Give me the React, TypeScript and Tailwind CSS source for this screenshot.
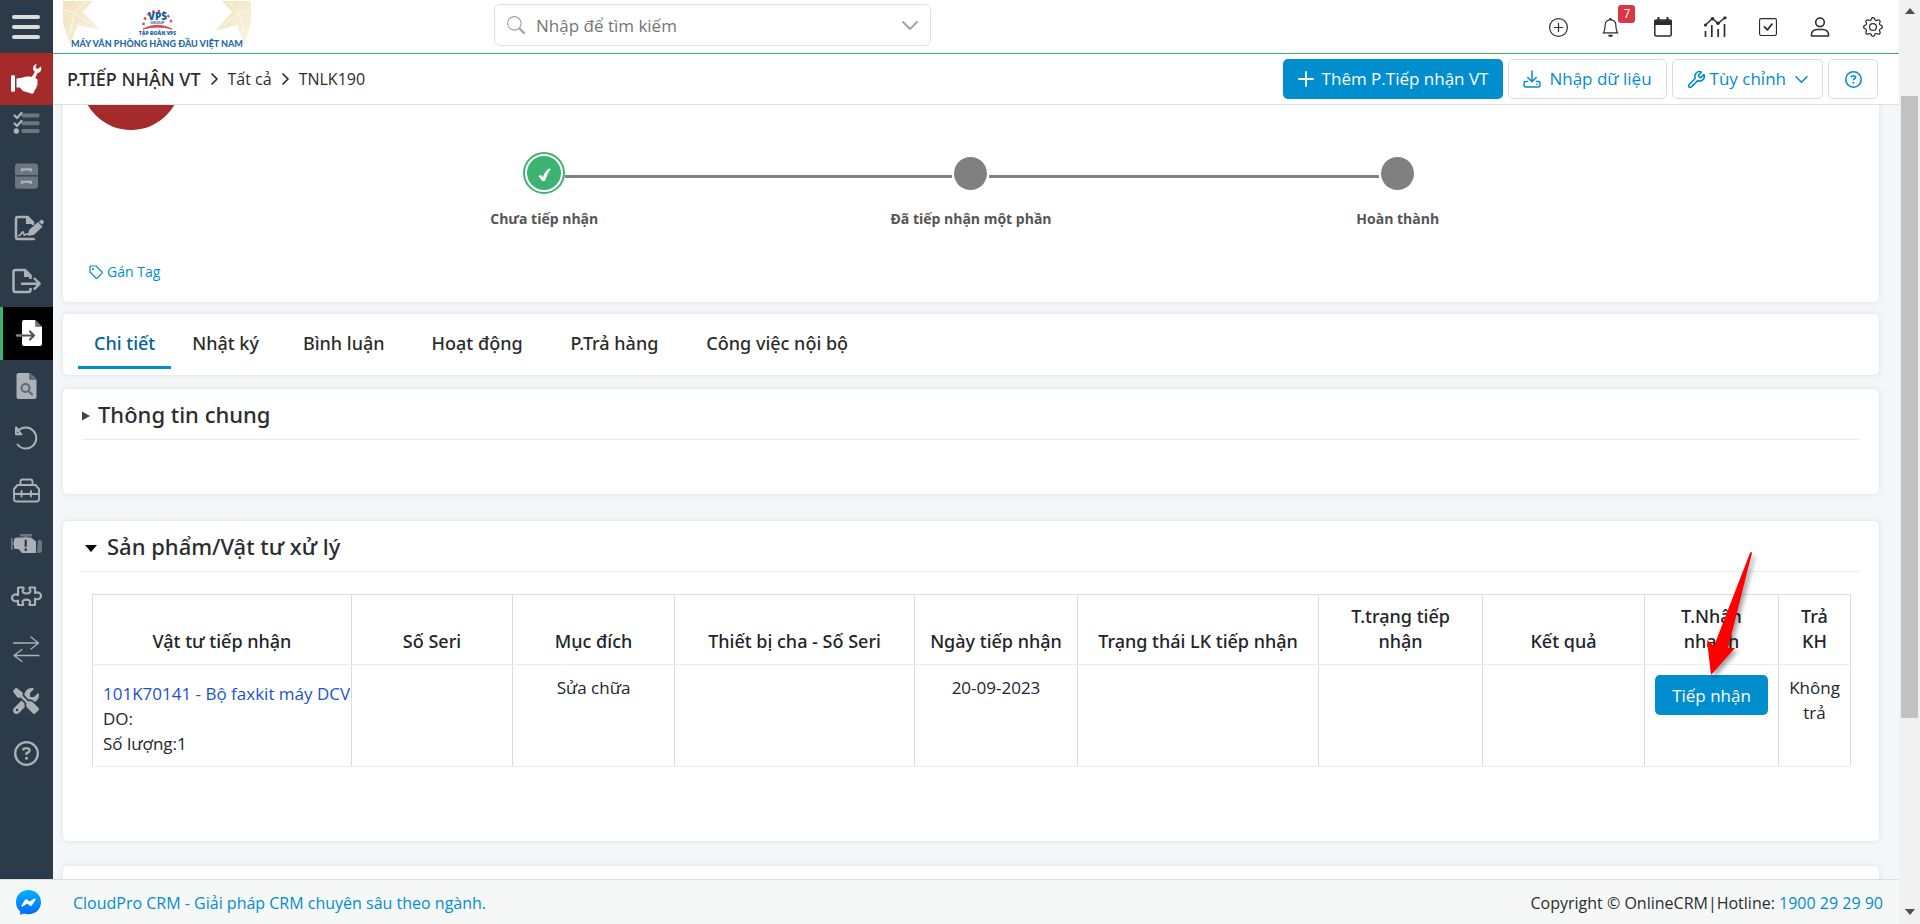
import type { ReactNode } from "react";
import { BsBell, BsCheckSquare, BsGear, BsPlusCircle, BsSearch } from "react-icons/bs";
import { FaRegCircleQuestion, FaScrewdriverWrench } from "react-icons/fa6";
import { Wrench } from "lucide-react";

function Icon({ children }: { children: ReactNode }) {
    return (
        <svg viewBox="0 0 32 32" className="size-8 overflow-visible" fill="none" stroke="none" aria-hidden="true">
            {children}
        </svg>
    );
}

function ChevronDown({ className }: { className: string }) {
    return (
        <svg viewBox="0 0 16 9" className={className} fill="none" stroke="currentColor" strokeWidth="2" strokeLinecap="round" strokeLinejoin="round" aria-hidden="true">
            <path d="m1 1 7 7 7-7" />
        </svg>
    );
}

function ChevronRight() {
    return (
        <svg viewBox="0 0 7 12" className="mx-[10px] h-3 w-[7px]" fill="none" stroke="currentColor" strokeWidth="1.700" strokeLinecap="round" strokeLinejoin="round" aria-hidden="true">
            <path d="m1 1 5 5-5 5" />
        </svg>
    );
}

const menu = [
    {
        label: "Danh sách",
        icon: (
            <Icon>
                <g fill="currentColor" opacity="0.5">
                    <rect x="11.500" y="6.500" width="18" height="4" rx="1.500" />
                    <rect x="11.500" y="14.200" width="18" height="4" rx="1.500" />
                    <rect x="11.500" y="22" width="18" height="4" rx="1.500" />
                </g>
                <path d="M4.500 8.500 7 11l4.500-5M4.500 16.500 7 19l4.500-5" stroke="currentColor" strokeWidth="2.400" strokeLinecap="round" strokeLinejoin="round" />
                <circle cx="6.300" cy="24" r="2.700" fill="currentColor" />
            </Icon>
        ),
    },
    {
        label: "Kho",
        icon: (
            <Icon>
                <g fill="currentColor" opacity="0.5">
                    <path d="M5 6.500a3 3 0 0 1 3-3h17a3 3 0 0 1 3 3v8.700H5zM5 16.500h23v9.200a3 3 0 0 1-3 3H8a3 3 0 0 1-3-3z" />
                </g>
                <path d="M12 11.500V9.300h9v2.200M12 24v-2.200h9V24" stroke="currentColor" strokeWidth="2.200" />
            </Icon>
        ),
    },
    {
        label: "Ký nhận",
        icon: (
            <Icon>
                <path d="M24 26.500v.5H8a2 2 0 0 1-2-2V7a2 2 0 0 1 2-2h9.500l5.500 5.500v2.500" stroke="currentColor" strokeWidth="2.500" strokeLinejoin="round" />
                <path d="M16 4.500 24 12h-8z" fill="currentColor" />
                <path d="m19 18 9-8 4.500 4.800-8.500 8L18 24z" fill="currentColor" />
                <path d="m28.800 9.800 1.400-1.300a2 2 0 0 1 3 3l-1.200 1.300z" fill="currentColor" />
                <path d="M9 23.500c2 0 2.500-3.500 4-3.500.8 0 .3 3 1.500 3s1.500-1.500 4.500-1" stroke="currentColor" strokeWidth="1.800" strokeLinecap="round" />
            </Icon>
        ),
    },
    {
        label: "Xuất",
        icon: (
            <Icon>
                <path d="M20.500 14V10.500L15 5H5.500a2 2 0 0 0-2 2v18a2 2 0 0 0 2 2h13a2 2 0 0 0 2-2v-2" stroke="currentColor" strokeWidth="2.500" />
                <path d="M14 4.500 21.500 12H14z" fill="currentColor" />
                <path d="M12 18.700h17M24.500 13.500l5.200 5.200-5.200 5.200" stroke="currentColor" strokeWidth="2.400" strokeLinecap="round" strokeLinejoin="round" />
            </Icon>
        ),
    },
    {
        label: "P.Tiếp nhận VT",
        active: true,
        icon: (
            <Icon>
                <path d="M11 5a2 2 0 0 1 2-2h11.500v6.500H31V27a2 2 0 0 1-2 2H13a2 2 0 0 1-2-2z" fill="#fff" />
                <path d="m25 3.500 5.500 5.500H25z" fill="#777" />
                <path d="M6 18.500h5" stroke="#888" strokeWidth="2.400" strokeLinecap="round" />
                <path d="M11 18.500h12M19 14.500l4 4-4 4" stroke="#555" strokeWidth="2.200" strokeLinecap="round" strokeLinejoin="round" />
            </Icon>
        ),
    },
    {
        label: "Tra cứu",
        icon: (
            <Icon>
                <path d="M6.500 5a2 2 0 0 1 2-2h11v6.500h7V27a2 2 0 0 1-2 2h-16a2 2 0 0 1-2-2z" fill="currentColor" />
                <path d="m20.500 3 6 5.800h-6z" fill="currentColor" opacity="0.5" />
                <circle cx="15.500" cy="18" r="4" stroke="#5f6a75" strokeWidth="2" />
                <path d="m18.500 21 3.500 3.500" stroke="#5f6a75" strokeWidth="2" strokeLinecap="round" />
            </Icon>
        ),
    },
    {
        label: "Hoàn trả",
        icon: (
            <Icon>
                <path d="M7.500 22.500A10.500 10.500 0 1 0 8 9l3.500 3.200H6V5.500l3 3" stroke="currentColor" strokeWidth="2" strokeLinecap="round" strokeLinejoin="round" />
            </Icon>
        ),
    },
    {
        label: "Bộ dụng cụ",
        icon: (
            <Icon>
                <path d="M7.500 10h18l3.500 4V24a2.500 2.500 0 0 1-2.500 2.500h-20A2.500 2.500 0 0 1 4 24V14zM10.500 10V6.500a2 2 0 0 1 2-2h8a2 2 0 0 1 2 2V10M4 19h25M11.500 16v5.500M21 16v5.500" stroke="currentColor" strokeWidth="1.900" strokeLinejoin="round" strokeLinecap="round" />
            </Icon>
        ),
    },
    {
        label: "Động cơ",
        icon: (
            <Icon>
                <g fill="currentColor" opacity="0.5">
                    <path d="M10 6h12v2.500h-4.500v3h-3v-3H10zM1 10h1.800v4H5v3H2.800v5H1zM28 12h2.500l1.500 1.500v9.500L30.500 25H27z" />
                </g>
                <path d="M8 9.500h13l5 4V25H12l-3.500-4H5.500A1.500 1.500 0 0 1 4 19.500v-7A3 3 0 0 1 7 9.500z" fill="currentColor" />
                <path d="M15.700 12.500v5.500M15.700 21v1.200" stroke="#2c3b49" strokeWidth="2.200" strokeLinecap="round" />
            </Icon>
        ),
    },
    {
        label: "Linh kiện",
        icon: (
            <Icon>
                <path d="M8.500 7.500h5v2c-1 .8-1.200 2-.2 3 1.500 1.400 5 1.400 6.500 0 1-1 .8-2.200-.2-3v-2H25v5.500c2-1.300 6-.5 6 2.800s-4 4.100-6 2.800V25h-5.500v-1.600c1-1 .8-2.100-.2-2.900-1.500-1.200-4.600-1.200-6 0-1 .8-1.200 1.900-.2 2.900V25H8v-4.400c-2 1.300-6 .5-6-2.800s4-4.100 6-2.800V8z" stroke="currentColor" strokeWidth="2.100" strokeLinejoin="round" />
            </Icon>
        ),
    },
    {
        label: "Chuyển đổi",
        icon: (
            <Icon>
                <path d="M3.500 10H28M21 4l7.500 6-7.500 6M29 22.500H4.500M12 16.500l-8 6 8 6" stroke="currentColor" strokeWidth="1.300" strokeLinecap="round" strokeLinejoin="round" />
            </Icon>
        ),
    },
    { label: "Công cụ", icon: <FaScrewdriverWrench className="size-[26px]" /> },
    { label: "Trợ giúp", icon: <FaRegCircleQuestion className="size-[25px]" /> },
];

const tabs = [
    { label: "Chi tiết", className: "px-4 border-[#008ecf] text-[#00649a]" },
    { label: "Nhật ký", className: "px-[21px] border-transparent" },
    { label: "Bình luận", className: "px-[23px] border-transparent" },
    { label: "Hoạt động", className: "px-6 border-transparent" },
    { label: "P.Trả hàng", className: "px-6 border-transparent" },
    { label: "Công việc nội bộ", className: "px-6 border-transparent" },
];

const columns = [
    { label: "Vật tư tiếp nhận", width: "w-[259px]" },
    { label: "Số Seri", width: "w-[161px]" },
    { label: "Mục đích", width: "w-[162px]" },
    { label: "Thiết bị cha - Số Seri", width: "w-[240px]" },
    { label: "Ngày tiếp nhận", width: "w-[163px]" },
    { label: "Trạng thái LK tiếp nhận", width: "w-[241px]" },
    { label: "T.trạng tiếp nhận", width: "w-[164px]" },
    { label: "Kết quả", width: "w-[162px]" },
    { label: "T.Nhận nhanh", width: "w-[134px]" },
    { label: "Trả KH", width: "w-[72px]" },
];

function Logo() {
    return (
        <svg viewBox="0 0 188 48" className="h-12 w-[188px]" role="img" aria-label="VPS">
            <defs>
                <linearGradient id="petal" x1="0" y1="0" x2="1" y2="1">
                    <stop offset="0" stopColor="#f0e2bd" />
                    <stop offset="1" stopColor="#fbf5e3" />
                </linearGradient>
            </defs>
            <g fill="url(#petal)">
                <path d="M0 0h30L20 11l17 18-22-5-8 20L0 22z" />
                <path d="M188 0h-29l10 11-17 19 22-6 7 20 7-22z" />
            </g>
            <path d="M11 12 22 1M11 12 1 9M11 12l16 11M11 12 7 32M176 12 166 1M176 12l11-3M176 12l-15 12M176 12l5 20" stroke="#fff" strokeWidth="0.700" fill="none" />
            <path d="M80.500 24A14 14 0 1 1 108.500 24" fill="none" stroke="#e0474c" strokeWidth="2.400" strokeDasharray="2.400 3.100" />
            <path d="M80 28q14.500-7.500 29 0-14.500-4-29 0z" fill="#e0474c" stroke="#e0474c" />
            <text x="94.500" y="18.500" textAnchor="middle" fontFamily="Open Sans, sans-serif" fontSize="10" fontWeight="800" fill="#1762a7">VPS</text>
            <text x="94.500" y="23" textAnchor="middle" fontFamily="Open Sans, sans-serif" fontSize="4" fontWeight="700" fill="#1762a7">GROUP</text>
            <text x="94.500" y="34" textAnchor="middle" fontFamily="Open Sans, sans-serif" fontSize="5" fontWeight="800" fill="#1762a7">TẬP ĐOÀN VPS</text>
            <text x="94" y="45.500" textAnchor="middle" fontFamily="Lato, sans-serif" fontSize="9" fontWeight="900" fill="#1f6aa8">MÁY VĂN PHÒNG HÀNG ĐẦU VIỆT NAM</text>
        </svg>
    );
}

function HeaderIcon({ label, children }: { label: string; children: ReactNode }) {
    return (
        <button type="button" aria-label={label} className="relative flex justify-center">
            {children}
        </button>
    );
}

function Sidebar() {
    return (
        <aside className="flex w-[53px] shrink-0 flex-col overflow-hidden bg-[#2c3b49]">
            <button type="button" aria-label="Menu" className="flex h-[53px] w-full shrink-0 flex-col items-center justify-center gap-[6px] pr-px">
                <span className="h-1 w-7 rounded-sm bg-[#dcdcdc]" />
                <span className="h-1 w-7 rounded-sm bg-[#dcdcdc]" />
                <span className="h-1 w-7 rounded-sm bg-[#dcdcdc]" />
            </button>
            <a href="#service" aria-label="Dịch vụ" className="z-10 flex h-[52px] shrink-0 items-center justify-center bg-[#a52a2a] pr-px">
                <svg viewBox="0 0 32 32" className="size-8" fill="#fff" aria-hidden="true">
                    <path d="M1 13.500q0-1.200 1.200-1.200h1.600Q5 12.300 5 13.500v14q0 1.200-1.200 1.200H2.200Q1 28.700 1 27.500z" />
                    <path d="M6.500 15.500 12 14.700q4-1.700 8-1.200l5 1.200 2.200 1.600q.9 1 .2 2.400l.2 2.500-.9 2.200-.6 2.200-1.500 1.500-.4 2q-.8 2-3 1.500L13 28l-3.200-3.400-3.300-.2z" />
                    <path d="M21.500 14.500 24.800 9q-2.300-2-1.600-5Q24 1.400 26.700.7L25.400 4.400l2.400 1.500 3-2.400q1.400 3-.6 5.300-1 1-2.600 1.200L25.200 15z" />
                </svg>
            </a>
            <nav aria-label="Phân hệ" className="-mt-2 grid h-[683px] shrink-0 grid-rows-[repeat(13,minmax(0,1fr))]">
                {menu.map((item) => (
                    <a
                        key={item.label}
                        href="#module"
                        aria-label={item.label}
                        className={
                            item.active
                                ? "flex items-center justify-center border-l-[3px] border-[#3cb371] bg-black pr-[2px] text-white"
                                : "flex items-center justify-center pr-px text-[#abb1b6]"
                        }
                    >
                        {item.icon}
                    </a>
                ))}
            </nav>
        </aside>
    );
}

function Header() {
    return (
        <header className="flex h-[54px] shrink-0 items-center border-b border-[#3cb371] bg-white pl-[10px]">
            <a href="#home" className="w-[431px] shrink-0 self-start pt-px">
                <Logo />
            </a>
            <div className="mb-[3px] flex h-[42px] w-[437px] items-center rounded-md border border-[#e0e0e0] px-3 text-[#a5a5a5]">
                <BsSearch className="size-[18px] shrink-0" />
                <input aria-label="Tìm kiếm" placeholder="Nhập để tìm kiếm" className="min-w-0 flex-1 bg-transparent px-[11px] pt-[2px] text-[17px] text-gray-800 outline-none placeholder:text-[#757575]" />
                <ChevronDown className="h-[9px] w-4 shrink-0" />
            </div>
            <div className="ml-auto grid w-[367px] grid-cols-7 items-center pt-px text-[#2c2c2c]">
                <HeaderIcon label="Thêm nhanh">
                    <BsPlusCircle className="size-[19px]" />
                </HeaderIcon>
                <HeaderIcon label="Thông báo">
                    <BsBell className="size-[19px]" />
                    <span className="absolute -top-[13px] left-[34px] flex h-[18px] w-[17px] items-center justify-center rounded-[3px] bg-[#dc3545] text-xs text-white">7</span>
                </HeaderIcon>
                <HeaderIcon label="Lịch">
                    <svg viewBox="0 0 20 20" className="size-5" fill="none" stroke="currentColor" aria-hidden="true">
                        <rect x="1.800" y="3" width="16.400" height="16" rx="1.500" strokeWidth="1.500" />
                        <path d="M1 3.500h18V8H1z" fill="currentColor" stroke="none" />
                        <path d="M5.500 0v4M14.500 0v4" strokeWidth="2" />
                    </svg>
                </HeaderIcon>
                <HeaderIcon label="Báo cáo">
                    <svg viewBox="0 0 24 22" className="h-[22px] w-6" fill="none" stroke="currentColor" aria-hidden="true">
                        <path d="m2.500 9 7-6.500 5.500 5 7-6" strokeWidth="1.500" />
                        <path d="M2.500 15v6M8.800 9v12M15.200 13v8M21.500 8v13" strokeWidth="1.700" />
                        <g fill="currentColor" stroke="none">
                            <circle cx="2.500" cy="9" r="1.600" />
                            <circle cx="9.500" cy="2.800" r="1.800" />
                            <circle cx="15" cy="7.300" r="1.800" />
                            <circle cx="22" cy="1.800" r="1.600" />
                        </g>
                    </svg>
                </HeaderIcon>
                <HeaderIcon label="Công việc">
                    <BsCheckSquare className="size-[18px]" />
                </HeaderIcon>
                <HeaderIcon label="Tài khoản">
                    <svg viewBox="0 0 20 20" className="size-5" fill="none" stroke="currentColor" strokeWidth="1.600" aria-hidden="true">
                        <circle cx="10" cy="5.300" r="4.300" />
                        <path d="M2 19q-.6 0-.6-.8 0-5.700 6-5.700h5.200q6 0 6 5.700 0 .8-.6.8z" />
                    </svg>
                </HeaderIcon>
                <HeaderIcon label="Cài đặt">
                    <BsGear className="size-5" />
                </HeaderIcon>
            </div>
        </header>
    );
}

function Toolbar() {
    const outline = "flex h-10 items-center rounded-[5px] border border-[#dcdcdc] bg-white text-[#008ecf]";
    return (
        <div className="flex h-[51px] shrink-0 items-center border-b border-[#dfe0e1] bg-white pr-[21px] pl-[14px]">
            <nav aria-label="Breadcrumb" className="flex items-center">
                <a href="#list" className="font-['Noto_Sans',sans-serif] text-lg font-medium">P.TIẾP NHẬN VT</a>
                <ChevronRight />
                <a href="#all" className="text-base">Tất cả</a>
                <ChevronRight />
                <span className="text-base">TNLK190</span>
            </nav>
            <div className="ml-auto flex gap-[5px] text-[17px]">
                <button type="button" className="flex h-10 items-center gap-2 rounded-[5px] bg-[#008ecf] px-[15px] text-white">
                    <svg viewBox="0 0 16 16" className="size-4" stroke="currentColor" strokeWidth="1.800" strokeLinecap="round" aria-hidden="true">
                        <path d="M8 1v14M1 8h14" />
                    </svg>
                    Thêm P.Tiếp nhận VT
                </button>
                <button type="button" className={`${outline} gap-2 px-[14px]`}>
                    <svg viewBox="0 0 18 18" className="size-[18px]" fill="none" stroke="currentColor" strokeWidth="1.500" strokeLinecap="round" strokeLinejoin="round" aria-hidden="true">
                        <path d="M9 1v10.500M4.800 7.500 9 11.700l4.200-4.200M4.500 11.500h-2Q1 11.500 1 13v2.500Q1 17 2.500 17h13q1.500 0 1.500-1.500V13q0-1.500-1.500-1.500h-2M14 14.300h.2" />
                    </svg>
                    Nhập dữ liệu
                </button>
                <button type="button" className={`${outline} px-[14px]`}>
                    <Wrench className="mr-1 size-[19px]" strokeWidth={2} />
                    Tùy chỉnh
                    <ChevronDown className="ml-[9px] h-[7px] w-[13px]" />
                </button>
                <button type="button" aria-label="Trợ giúp" className={`${outline} w-[50px] justify-center`}>
                    <FaRegCircleQuestion className="size-[17px]" />
                </button>
            </div>
        </div>
    );
}

function Step({ label, done, first, last }: { label: string; done?: boolean; first?: boolean; last?: boolean }) {
    return (
        <li className="flex flex-col items-center">
            <div className="flex h-[42px] w-full items-center">
                <span className={`mt-[6px] h-[3px] flex-1 ${first ? "" : "bg-[#808080]"}`} />
                {done ? (
                    <span className="flex size-[42px] items-center justify-center rounded-full border-2 border-[#3cb371]">
                        <span className="flex size-[34px] items-center justify-center rounded-full bg-[#3cb371]">
                            <svg viewBox="0 0 13 14" className="mt-1 h-[14px] w-[13px]" fill="#fff" aria-hidden="true">
                                <path d="M.5 8 3 7l1.800 2.300Q7 3 11 .5l1.700.5Q9 6 7 12.800L4.500 13.300z" />
                            </svg>
                        </span>
                    </span>
                ) : (
                    <span className="mx-[2px] size-[33px] rounded-full bg-[#808080]" />
                )}
                <span className={`mt-[6px] h-[3px] flex-1 ${last ? "" : "bg-[#808080]"}`} />
            </div>
            <span className="mt-[15px] text-sm leading-5 font-bold text-[#555]">{label}</span>
        </li>
    );
}

const card = "rounded-[5px] bg-white shadow-[0_0_5px_1px_rgba(0,0,0,0.07)]";

function ItemsTable() {
    const td = "border-x border-b border-x-[#dcdcdc] border-b-[#ededed] px-[10px] py-[10px] align-top";
    return (
        <table className="w-full table-fixed border-collapse text-[17px] leading-[25px] text-[#212529]">
            <thead>
                <tr className="h-[70px] font-['Noto_Sans',sans-serif] text-lg leading-[25px]">
                    {columns.map((col) => (
                        <th key={col.label} className={`${col.width} border border-[#dcdcdc] border-b-[#ededed] px-[10px] pb-[10px] align-bottom font-medium`}>
                            {col.label}
                        </th>
                    ))}
                </tr>
            </thead>
            <tbody>
                <tr className="h-[101px] text-center">
                    <td className={`${td} text-left`}>
                        <a href="#item" className="mt-[6px] -mr-[9px] block overflow-hidden whitespace-nowrap text-[#1a53d0]">101K70141 - Bộ faxkit máy DCVI</a>
                        <div>DO:</div>
                        <div>Số lượng:1</div>
                    </td>
                    <td className={td} />
                    <td className={td}>Sửa chữa</td>
                    <td className={td} />
                    <td className={td}>20-09-2023</td>
                    <td className={td} />
                    <td className={td} />
                    <td className={td} />
                    <td className={td}>
                        <div className="relative">
                            <button type="button" className="h-10 w-full rounded-[5px] bg-[#008ecf] text-white">Tiếp nhận</button>
                            {/* callout arrow */}
                            <svg viewBox="0 0 48 125" className="pointer-events-none absolute bottom-[39px] left-[50px] h-[125px] w-12 overflow-visible drop-shadow-[3px_3px_2px_rgba(0,0,0,0.35)]" aria-hidden="true">
                                <path d="M45 2q1-2 2 0L23 97l7 0L6 124 2 89l7 6z" fill="#f00" />
                            </svg>
                        </div>
                    </td>
                    <td className={td}>Không trả</td>
                </tr>
            </tbody>
        </table>
    );
}

function Content() {
    return (
        <main className="min-h-0 flex-1 overflow-hidden bg-[#f3f7fa] pr-5 pl-[10px]">
            <section className={`${card} -mt-[85px] h-[282px] pt-[10px]`}>
                <div className="ml-[18px] size-[100px] rounded-full bg-[#a52a2a]" />
                <ol className="mx-auto mt-[22px] grid w-[70.5%] grid-cols-3">
                    <Step label="Chưa tiếp nhận" done first />
                    <Step label="Đã tiếp nhận một phần" />
                    <Step label="Hoàn thành" last />
                </ol>
                <button type="button" className="mt-[33px] ml-[26px] flex items-center gap-1 text-sm text-[#008ecf]">
                    <svg viewBox="0 0 14 14" className="size-[14px]" fill="none" stroke="currentColor" strokeWidth="1.200" strokeLinejoin="round" aria-hidden="true">
                        <path d="M1 2q0-1 1-1h5l6 6q.6.700 0 1.400L8.400 13q-.7.600-1.400 0L1 7z" />
                        <circle cx="4" cy="4" r="0.500" />
                    </svg>
                    Gán Tag
                </button>
            </section>

            <section role="tablist" className={`${card} mt-3 flex h-[61px] pl-[15px]`}>
                {tabs.map((tab, i) => (
                    <button key={tab.label} type="button" role="tab" aria-selected={i === 0} className={`mb-[6px] border-b-[3px] pt-[6px] font-['Noto_Sans',sans-serif] text-lg font-medium ${tab.className}`}>
                        {tab.label}
                    </button>
                ))}
            </section>

            <section className={`${card} mt-[14px] h-[105px] px-[19px]`}>
                <h2 className="flex h-[51px] items-center gap-2 border-b border-[#ededed] font-['Noto_Sans',sans-serif] text-[22px] font-medium">
                    <svg viewBox="0 0 8 10" className="mt-1 h-[10px] w-2" fill="#444" aria-hidden="true">
                        <path d="m0 .5 8 4.500-8 4.500z" />
                    </svg>
                    Thông tin chung
                </h2>
            </section>

            <section className={`${card} mt-[27px] h-80 px-[19px]`}>
                <h2 className="flex h-[51px] items-center gap-[10px] border-b border-[#ededed] pl-[3px] font-['Noto_Sans',sans-serif] text-[22px] font-medium">
                    <svg viewBox="0 0 12 7" className="mt-1 h-[7px] w-3" fill="#000" aria-hidden="true">
                        <path d="M0 0h12L6 7z" />
                    </svg>
                    Sản phẩm/Vật tư xử lý
                </h2>
                <div className="px-[10px] pt-[22px]">
                    <ItemsTable />
                </div>
            </section>

            <section className={`${card} mt-[25px] h-24`} />
        </main>
    );
}

function Footer() {
    return (
        <footer className="flex h-[45px] shrink-0 items-center border-t border-[#dcdddd] bg-[#f6f8f8] pr-4 pl-4 text-base">
            <a href="#messenger" aria-label="Messenger">
                <svg viewBox="0 0 25 25" className="size-[25px]" aria-hidden="true">
                    <defs>
                        <linearGradient id="messenger" x1="0" y1="0" x2="0" y2="1">
                            <stop offset="0" stopColor="#00b2ff" />
                            <stop offset="1" stopColor="#006aff" />
                        </linearGradient>
                    </defs>
                    <path d="M12.500 0C5.400 0 0 5.200 0 12.200c0 3.700 1.500 6.800 4.200 9v3.600l4-1.400c1.300.5 2.800.8 4.300.8 7.100 0 12.500-5 12.500-12S19.600 0 12.500 0z" fill="url(#messenger)" />
                    <path d="m5 16 4-6.200q.8-1 1.800-.4l2.900 2.200L18 8.800q1.700-1 1.800.6l-4 6q-.8 1-1.800.4l-2.800-2.200-4.400 2.900z" fill="#fff" />
                </svg>
            </a>
            <a href="#cloudpro" className="ml-8 pt-px text-[#008ecf]">CloudPro CRM - Giải pháp CRM chuyên sâu theo ngành.</a>
            <p className="ml-auto pt-px">
                Copyright © OnlineCRM|Hotline: <a href="tel:1900292990" className="text-[#008ecf]">1900 29 29 90</a>
            </p>
        </footer>
    );
}

function ScrollRail() {
    return (
        <div className="flex w-[21px] shrink-0 flex-col items-center bg-[#f1f1f1] text-[#505050]" aria-hidden="true">
            <svg viewBox="0 0 10 6" className="mt-2 h-[6px] w-[10px]" fill="currentColor">
                <path d="M0 6 5 0l5 6z" />
            </svg>
            <div className="flex-[82]" />
            <div className="w-[17px] flex-[622] bg-[#c1c1c1]" />
            <div className="flex-[191]" />
            <svg viewBox="0 0 10 6" className="mb-[9px] h-[6px] w-[10px]" fill="currentColor">
                <path d="M0 0h10L5 6z" />
            </svg>
        </div>
    );
}

export default function App() {
    return (
        <div className="flex h-screen overflow-hidden bg-white font-['Open_Sans','Noto_Sans',sans-serif] text-[#2c2c2c]">
            <div className="flex min-w-0 flex-1 flex-col">
                <div className="flex min-h-0 flex-1">
                    <Sidebar />
                    <div className="flex min-w-0 flex-1 flex-col">
                        <Header />
                        <Toolbar />
                        <Content />
                    </div>
                </div>
                <Footer />
            </div>
            <ScrollRail />
        </div>
    );
}
